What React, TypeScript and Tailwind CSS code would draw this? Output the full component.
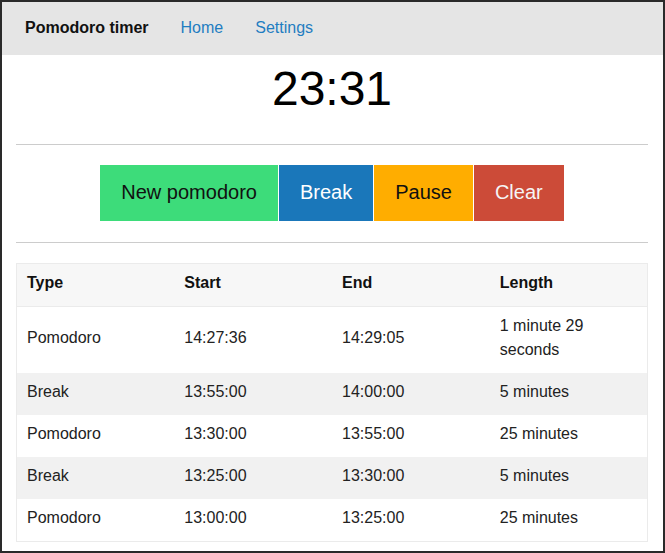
import React from "react";

const rows = [
  { type: "Pomodoro", start: "14:27:36", end: "14:29:05", length: "1 minute 29 seconds" },
  { type: "Break", start: "13:55:00", end: "14:00:00", length: "5 minutes" },
  { type: "Pomodoro", start: "13:30:00", end: "13:55:00", length: "25 minutes" },
  { type: "Break", start: "13:25:00", end: "13:30:00", length: "5 minutes" },
  { type: "Pomodoro", start: "13:00:00", end: "13:25:00", length: "25 minutes" },
];

export default function App() {
  return (
    <div
      className="w-[665px] h-[553px] border-2 border-[#2a2a2a] bg-white overflow-hidden text-[#222]"
      style={{ fontFamily: '"Liberation Sans", Arial, sans-serif' }}
    >
      <nav className="h-[53px] bg-[#e5e5e5] flex items-center pl-[23px] pb-[2px] gap-8 text-[16px]">
        <span className="font-bold text-[#111]">Pomodoro timer</span>
        <a className="text-[#1f7dc1]">Home</a>
        <a className="text-[#1f7dc1]">Settings</a>
      </nav>
      <main className="pl-[14px] pr-[15px]">
        <div className="mt-[6px] text-[48px] leading-[55px] text-center text-black">23:31</div>
        <div className="mt-[28px] border-t border-[#cccccc]" />
        <div className="mt-[20px] flex justify-center gap-px text-[20px]">
          <button className="h-[56px] px-[21px] pb-[2px] bg-[#3ddc7a] text-[#111]">New pomodoro</button>
          <button className="h-[56px] px-[21px] pb-[2px] bg-[#1a77ba] text-white">Break</button>
          <button className="h-[56px] px-[21px] pb-[2px] bg-[#ffad00] text-[#111]">Pause</button>
          <button className="h-[56px] px-[21px] pb-[2px] bg-[#cc4b38] text-[#f5f5f5]">Clear</button>
        </div>
        <div className="mt-[21px] border-t border-[#cccccc]" />
        <table className="mt-[20px] w-full table-fixed border-collapse border border-[#ebebeb] text-[16px] leading-6">
          <thead>
            <tr className="bg-[#f7f7f7]">
              <th className="text-left font-bold px-[10px] pt-[7px] pb-[11px] border-b border-[#ebebeb] text-[#111]">Type</th>
              <th className="text-left font-bold px-[10px] pt-[7px] pb-[11px] border-b border-[#ebebeb] text-[#111]">Start</th>
              <th className="text-left font-bold px-[10px] pt-[7px] pb-[11px] border-b border-[#ebebeb] text-[#111]">End</th>
              <th className="text-left font-bold px-[10px] pt-[7px] pb-[11px] border-b border-[#ebebeb] text-[#111]">Length</th>
            </tr>
          </thead>
          <tbody>
            {rows.map((r, i) => (
              <tr key={i} className={i % 2 === 1 ? "bg-[#f1f1f1]" : "bg-white"}>
                <td className="px-[10px] pt-[7px] pb-[11px]">{r.type}</td>
                <td className="px-[10px] pt-[7px] pb-[11px]">{r.start}</td>
                <td className="px-[10px] pt-[7px] pb-[11px]">{r.end}</td>
                <td className="px-[10px] pt-[7px] pb-[11px]">{r.length}</td>
              </tr>
            ))}
          </tbody>
        </table>
      </main>
    </div>
  );
}
